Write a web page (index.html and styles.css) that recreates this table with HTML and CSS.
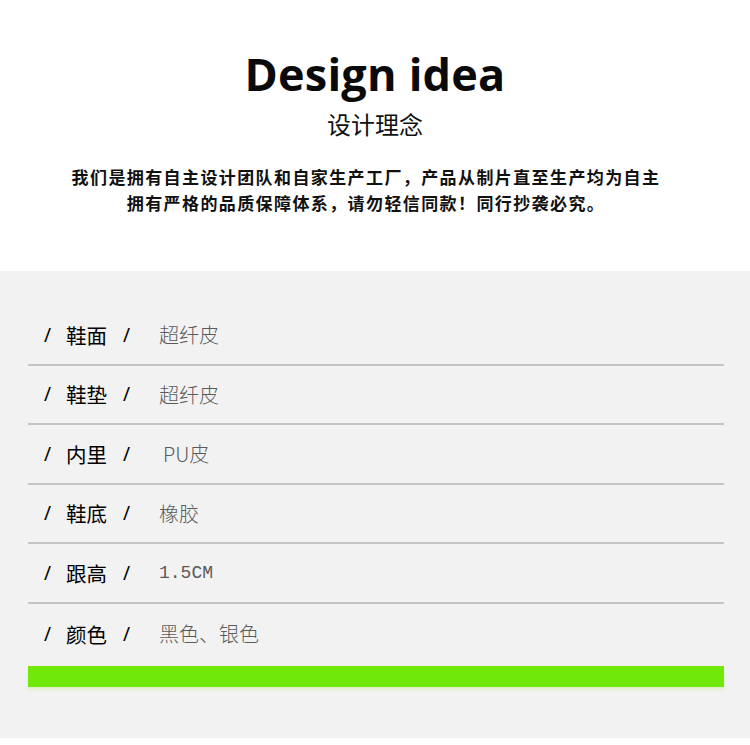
FILE: index.html
```html
<!DOCTYPE html>
<html lang="zh">
<head>
<meta charset="utf-8">
<title>Design idea</title>
<link rel="stylesheet" href="styles.css">
</head>
<body>
<div class="page">
  <section class="intro">
    <h1 class="title">Design idea</h1>
    <h2 class="subtitle">设计理念</h2>
    <p class="desc">我们是拥有自主设计团队和自家生产工厂，产品从制片直至生产均为自主<br>拥有严格的品质保障体系，请勿轻信同款！同行抄袭必究。</p>
  </section>
  <section class="specs">
    <ul class="spec-list">
      <li class="spec-row"><span class="label"><span class="slash">/</span><span class="name">鞋面</span><span class="slash">/</span></span><span class="value">超纤皮</span></li>
      <li class="spec-row"><span class="label"><span class="slash">/</span><span class="name">鞋垫</span><span class="slash">/</span></span><span class="value">超纤皮</span></li>
      <li class="spec-row"><span class="label"><span class="slash">/</span><span class="name">内里</span><span class="slash">/</span></span><span class="value value-pu">PU皮</span></li>
      <li class="spec-row"><span class="label"><span class="slash">/</span><span class="name">鞋底</span><span class="slash">/</span></span><span class="value">橡胶</span></li>
      <li class="spec-row"><span class="label"><span class="slash">/</span><span class="name">跟高</span><span class="slash">/</span></span><span class="value value-mono">1.5CM</span></li>
      <li class="spec-row"><span class="label"><span class="slash">/</span><span class="name">颜色</span><span class="slash">/</span></span><span class="value">黑色、银色</span></li>
    </ul>
    <div class="green-bar"></div>
  </section>
  <div class="footer-strip"></div>
</div>
</body>
</html>
```

FILE: styles.css
```css
* { box-sizing: border-box; }
html, body { margin: 0; padding: 0; background: #ffffff; }
body { font-family: "Noto Sans CJK SC", "Noto Sans", sans-serif; color: #111; }
.page { width: 750px; height: 745px; overflow: hidden; display: flex; flex-direction: column; }

.intro { height: 271px; background: #fff; display: flex; flex-direction: column; align-items: center; padding-top: 46px; }
.title { margin: 0; font-family: "Open Sans", "Noto Sans", sans-serif; font-weight: 700; font-size: 45px; line-height: 56px; color: #0a0a0a; letter-spacing: 0.2px; }
.subtitle { margin: 7px 0 0; font-weight: 400; font-size: 24px; line-height: 30px; color: #111; }
.desc { margin: 25px 0 0; padding-right: 18px; font-weight: 700; font-size: 17px; line-height: 26px; letter-spacing: 1.4px; text-align: center; color: #111; }

.specs { flex: 1; background: #f2f2f2; padding: 35px 26px 0 28px; display: flex; flex-direction: column; }
.spec-list { list-style: none; margin: 0; padding: 0; }
.spec-row { height: 59.5px; display: flex; align-items: center; border-bottom: 2px solid #c4c4c4; }
.spec-row:last-child { border-bottom: none; height: 60px; }
.label { width: 131px; padding-left: 16px; display: flex; align-items: center; font-size: 20px; font-weight: 400; color: #000; }
.slash { font-family: "Noto Sans", sans-serif; font-size: 19px; }
.name { margin: 0 16px 0 15px; font-size: 20.5px; font-weight: 400; }
.value { font-size: 20px; font-weight: 300; color: #5a5a5a; }
.value-pu { padding-left: 4px; }
.value-mono { font-family: "Liberation Mono", monospace; font-size: 18px; }
.green-bar { height: 21px; background: #6fe80a; margin-top: 2px; box-shadow: 0 3px 3px rgba(111, 232, 10, 0.15); }
.footer-strip { height: 7px; background: #fff; }
```
